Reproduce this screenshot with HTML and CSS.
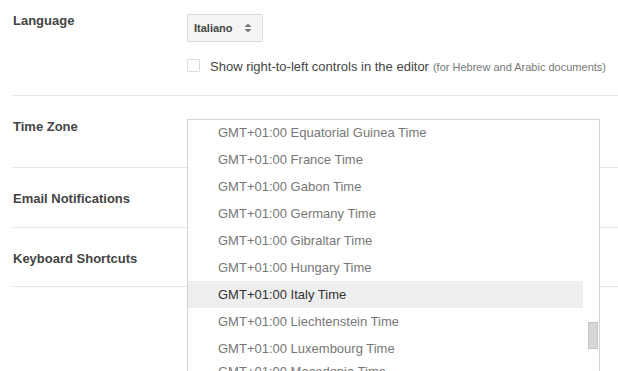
FILE: index.html
```html
<!DOCTYPE html>
<html lang="en">
  <head>
    <meta charset="UTF-8" />
    <meta name="viewport" content="width=device-width, initial-scale=1.0" />
    <title>Settings</title>
    <link rel="stylesheet" href="styles.css">
  </head>
  <body>
    <div class="settings">
      <div class="section first">
        <div class="label">Language</div>
        <div class="field">
          <div class="select-btn">
            <span>Italiano</span>
            <svg width="8" height="10" viewBox="0 0 8 10">
              <path d="M4 0.5 L7.5 4 L0.5 4 Z" fill="#777" />
              <path d="M4 9.5 L7.5 6 L0.5 6 Z" fill="#777" />
            </svg>
          </div>
          <div class="check-row">
            <span class="checkbox"></span>
            <span class="check-text">Show right-to-left controls in the editor</span>
            <span class="hint">(for Hebrew and Arabic documents)</span>
          </div>
        </div>
      </div>

      <div class="section tall">
        <div class="label">Time Zone</div>
        <div class="field">
          <div class="dropdown">
            <ul class="options">
              <li>GMT+01:00 Equatorial Guinea Time</li>
              <li>GMT+01:00 France Time</li>
              <li>GMT+01:00 Gabon Time</li>
              <li>GMT+01:00 Germany Time</li>
              <li>GMT+01:00 Gibraltar Time</li>
              <li>GMT+01:00 Hungary Time</li>
              <li class="selected">GMT+01:00 Italy Time</li>
              <li>GMT+01:00 Liechtenstein Time</li>
              <li>GMT+01:00 Luxembourg Time</li>
              <li class="partial">GMT+01:00 Macedonia Time</li>
            </ul>
            <div class="scrollbar">
              <div class="thumb"></div>
            </div>
          </div>
        </div>
      </div>

      <div class="section">
        <div class="label">Email Notifications</div>
      </div>

      <div class="section last">
        <div class="label">Keyboard Shortcuts</div>
      </div>
    </div>
  </body>
</html>
```

FILE: styles.css
```css
body,
ul {
  margin: 0;
  padding: 0;
}

body {
  font-family: "Liberation Sans", Arial, sans-serif;
  background-color: #fff;
  color: #333;
}

.settings {
  padding-left: 13px;
  height: 371px;
  overflow: hidden;
}

.section {
  display: flex;
  padding: 23px 0 20px;
  border-bottom: 1px solid #e5e5e5;
}

.section.first {
  padding: 13px 0 22px;
}

.section.tall {
  padding-bottom: 32px;
}

.section.last {
  padding-bottom: 19px;
}

.label {
  width: 174px;
  flex-shrink: 0;
  font-size: 13px;
  line-height: 16px;
  font-weight: bold;
  color: #444;
}

.field {
  flex: 1;
  position: relative;
}

/* Language select */
.select-btn {
  display: inline-flex;
  align-items: center;
  gap: 11px;
  margin-top: 1px;
  height: 26px;
  padding: 0 10px 0 6px;
  background-color: #f5f5f5;
  border: 1px solid #dcdcdc;
  border-radius: 2px;
  font-size: 11px;
  font-weight: bold;
  color: #444;
}

.check-row {
  display: flex;
  align-items: center;
  margin-top: 15px;
  height: 16px;
  white-space: nowrap;
}

.checkbox {
  width: 11px;
  height: 11px;
  border: 1px solid #dcdcdc;
  border-radius: 1px;
  margin-right: 10px;
}

.check-text {
  font-size: 13px;
  color: #444;
  margin-top: 2px;
}

.hint {
  font-size: 11px;
  color: #777;
  margin-left: 4px;
  margin-top: 3px;
}

/* Open time zone list */
.dropdown {
  position: absolute;
  top: 0;
  left: 0;
  z-index: 2;
  display: flex;
  width: 411px;
  height: 251px;
  background-color: #fff;
  border: 1px solid #d4d4d4;
  border-bottom: none;
  overflow: hidden;
}

.options {
  list-style: none;
  width: 395px;
  margin-top: -1px;
}

.options li {
  height: 27px;
  line-height: 27px;
  padding-left: 30px;
  font-size: 13px;
  color: #777;
  white-space: nowrap;
}

.options li.partial {
  line-height: 20px;
}

.options li.selected {
  background-color: #eee;
  color: #333;
}

.scrollbar {
  position: relative;
  width: 16px;
}

.thumb {
  position: absolute;
  top: 202px;
  left: 5px;
  width: 8px;
  height: 25px;
  background-color: #d6d6d6;
  border: 1px solid #c4c4c4;
}
```
